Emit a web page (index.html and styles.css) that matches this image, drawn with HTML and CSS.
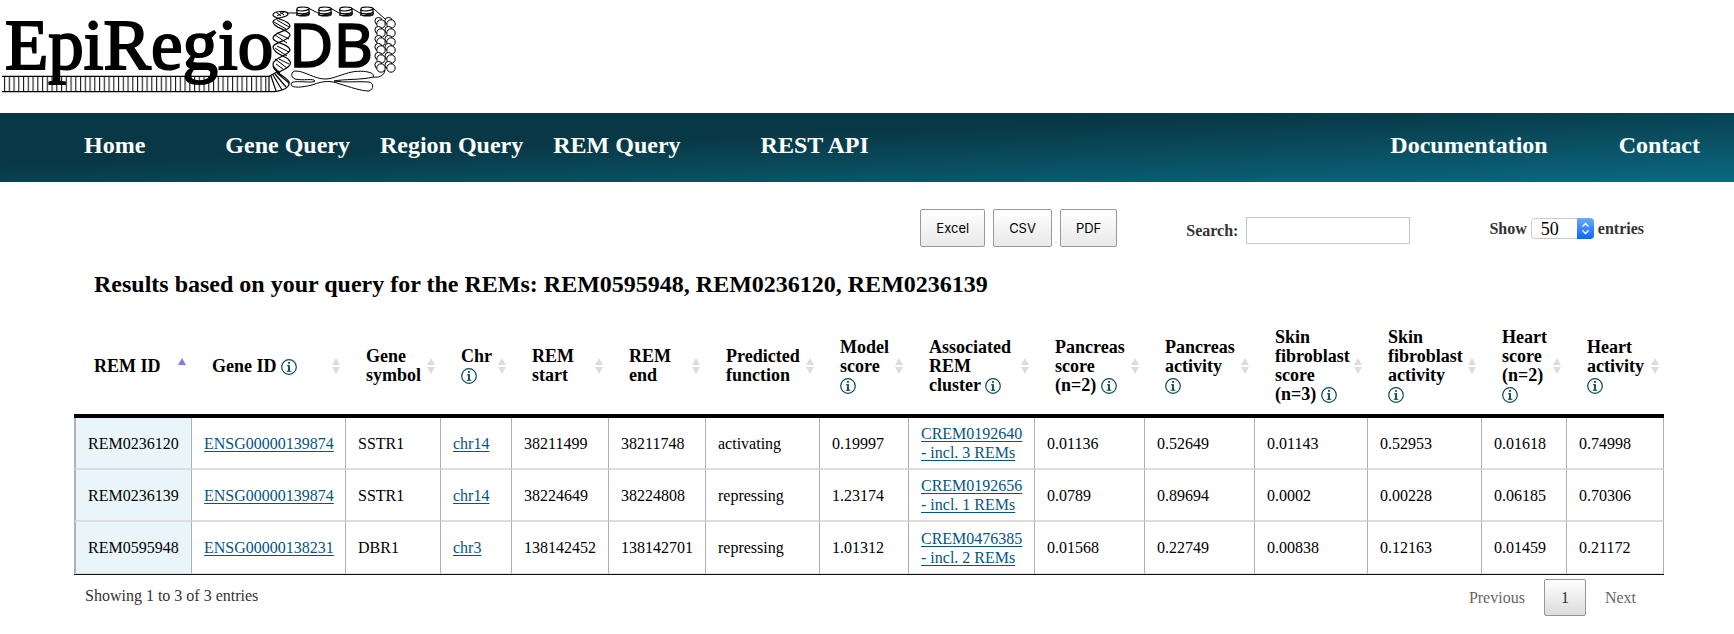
FILE: index.html
```html
<!DOCTYPE html>
<html lang="en">
<head>
<meta charset="utf-8">
<title>EpiRegio DB</title>
<link rel="stylesheet" href="styles.css">
</head>
<body>
<svg width="0" height="0" class="defs" aria-hidden="true">
  <symbol id="info" viewBox="0 0 16 16"><circle cx="8" cy="8" r="7.3" fill="none" stroke="currentColor" stroke-width="1.2"/><rect x="7.1" y="3" width="1.8" height="1.8" fill="currentColor"/><path d="M6 6.7H8V12.6M5.8 12.3H10.4" fill="none" stroke="currentColor" stroke-width="1.1"/><path d="M8 6.2V12.6" stroke="currentColor" stroke-width="1.7"/></symbol>
  <symbol id="sort" viewBox="0 0 8 16"><path d="M4 0L8 7H0ZM0 9H8L4 16Z" fill="#dcdcdc"/></symbol>
  <symbol id="sort-up" viewBox="0 0 8 16"><path d="M4 0L8 7H0Z" fill="#7f7fe0"/></symbol>
</svg>

<header class="brand">
  <a href="#" aria-label="EpiRegio DB">
  <svg class="logo" viewBox="0 0 400 96" width="400" height="96">
    <defs>
      <pattern id="rungs" x="4" y="76" width="4.75" height="16" patternUnits="userSpaceOnUse"><path d="M.6 0V16" stroke="#000" stroke-width="1"/></pattern>
      <g id="barrel"><path d="M1 1.5V7.5C1 9.5 13 9.5 13 7.5V1.5C13-.5 1-.5 1 1.5ZM0 3C4 4.5 10 4.5 14 1.6M0 6C4 7 10 7 14 5M0 8C5 8.5 10 8.3 14 6.8"/></g>
      <g id="bead" fill="#fff"><circle cx="-12.5" cy="-3" r="3.6"/><circle cx="-2.5" cy="-3" r="3.6"/><circle cx="-10" cy="0" r="4.2"/><circle cx="0" cy="0" r="4.2"/></g>
    </defs>
    <rect x="4" y="76" width="264" height="16" fill="url(#rungs)"/>
    <g fill="none" stroke="#000" stroke-width="1.2">
      <path d="M2 76.3H269L279 71M2 91.7H268C282 92 290 88 289 82C288 77 275 74 273 66"/>
      <path d="M269 76L269 91M271 76L276 91M273 75L282 90M275 74L286 87M277 73L289 83"/>
      <path d="M279 72C288 68 294 64 288 59C284 56 273 53 273 47C273 42 290 41 290 35C290 30 273 28 273 22C273 17 288 18 288 14C288 10 273 11 273 15C273 19 290 20 290 26C290 31 273 32 273 38C273 43 290 44 290 50C290 55 273 58 273 64C273 68 277 70 280 73"/>
      <path d="M275 59L287 68M276 64L283 69M279 59L289 64M275 48L287 56M277 46L289 52M275 35L287 43M277 33L289 39M274 22L286 29M277 20L289 27M276 12L281 16M280 12L284 15M284 12L277 16" stroke-width="1"/>
      <path d="M287 13L296 13M310 9L318 13M332 9L339 13M353 9L360 13M374 9L385 19" stroke-width="1"/>
      <g stroke-width="1.2"><use href="#barrel" x="296" y="7"/><use href="#barrel" x="318" y="7"/><use href="#barrel" x="339" y="7"/><use href="#barrel" x="360" y="7"/></g>
      <g stroke-width="1"><use href="#bead" x="391" y="24"/><use href="#bead" x="391" y="33"/><use href="#bead" x="391" y="42"/><use href="#bead" x="391" y="50"/><use href="#bead" x="391" y="59"/><use href="#bead" x="391" y="68"/></g>
      <path d="M385 70C384 76 379 78 373 77C376 72 362 70 352 72C342 74 333 79 325 79C315 79 304 71 296 71C291 71 290 77 295 79C303 81 314 78 315 81C312 84 291 79 291 84C291 89 304 87 312 85C325 80 332 81 340 84C350 87 361 91 369 91C374 89 374 83 369 82C357 81 345 83 334 81C343 79 363 80 373 77" stroke-width="1"/>
    </g>
    <text x="5" y="69" class="logo-serif">EpiRegio</text>
    <text x="289" y="67" class="logo-sans">DB</text>
  </svg>
  </a>
</header>

<nav class="nav">
  <a href="#">Home</a>
  <div class="queries"><a href="#">Gene Query</a><a href="#">Region Query</a><a href="#">REM Query</a></div>
  <a href="#">REST API</a>
  <div class="nav-end"><a href="#">Documentation</a><a href="#">Contact</a></div>
</nav>

<main class="main">
  <div class="toolbar">
    <div class="exports"><button>Excel</button><button>CSV</button><button>PDF</button></div>
    <div class="search"><label for="q">Search:</label><input id="q" type="search"></div>
    <div class="length"><label for="len">Show</label><span class="select"><select id="len"><option>50</option></select><svg viewBox="0 0 17 21" width="17" height="21" aria-hidden="true"><path d="M5.5 8.5L8.5 5.5L11.5 8.5M5.5 12.5L8.5 15.5L11.5 12.5" fill="none" stroke="#fff" stroke-width="1.5"/></svg></span><span>entries</span></div>
  </div>

  <h1>Results based on your query for the REMs: REM0595948, REM0236120, REM0236139</h1>

  <table>
    <colgroup><col class="c1"><col class="c2"><col class="c3"><col class="c4"><col class="c5"><col class="c6"><col class="c7"><col class="c8"><col class="c9"><col class="c10"><col class="c11"><col class="c12"><col class="c13"><col class="c14"><col class="c15"></colgroup>
    <thead>
      <tr>
        <th><div class="head">REM ID<svg class="sort"><use href="#sort-up"/></svg></div></th>
        <th><div class="head"><span>Gene ID <svg class="info"><use href="#info"/></svg></span><svg class="sort"><use href="#sort"/></svg></div></th>
        <th><div class="head">Gene<br>symbol<svg class="sort"><use href="#sort"/></svg></div></th>
        <th><div class="head">Chr<br><svg class="info"><use href="#info"/></svg><svg class="sort"><use href="#sort"/></svg></div></th>
        <th><div class="head">REM<br>start<svg class="sort"><use href="#sort"/></svg></div></th>
        <th><div class="head">REM<br>end<svg class="sort"><use href="#sort"/></svg></div></th>
        <th><div class="head">Predicted<br>function<svg class="sort"><use href="#sort"/></svg></div></th>
        <th><div class="head">Model<br>score<br><svg class="info"><use href="#info"/></svg><svg class="sort"><use href="#sort"/></svg></div></th>
        <th><div class="head">Associated<br>REM<br>cluster <svg class="info"><use href="#info"/></svg><svg class="sort"><use href="#sort"/></svg></div></th>
        <th><div class="head">Pancreas<br>score<br>(n=2) <svg class="info"><use href="#info"/></svg><svg class="sort"><use href="#sort"/></svg></div></th>
        <th><div class="head">Pancreas<br>activity<br><svg class="info"><use href="#info"/></svg><svg class="sort"><use href="#sort"/></svg></div></th>
        <th><div class="head">Skin<br>fibroblast<br>score<br>(n=3) <svg class="info"><use href="#info"/></svg><svg class="sort"><use href="#sort"/></svg></div></th>
        <th><div class="head">Skin<br>fibroblast<br>activity<br><svg class="info"><use href="#info"/></svg><svg class="sort"><use href="#sort"/></svg></div></th>
        <th><div class="head">Heart<br>score<br>(n=2)<br><svg class="info"><use href="#info"/></svg><svg class="sort"><use href="#sort"/></svg></div></th>
        <th><div class="head">Heart<br>activity<br><svg class="info"><use href="#info"/></svg><svg class="sort"><use href="#sort"/></svg></div></th>
      </tr>
    </thead>
    <tbody>
      <tr><td>REM0236120</td><td><a href="#">ENSG00000139874</a></td><td>SSTR1</td><td><a href="#">chr14</a></td><td>38211499</td><td>38211748</td><td>activating</td><td>0.19997</td><td><a href="#">CREM0192640<br>- incl. 3 REMs</a></td><td>0.01136</td><td>0.52649</td><td>0.01143</td><td>0.52953</td><td>0.01618</td><td>0.74998</td></tr>
      <tr><td>REM0236139</td><td><a href="#">ENSG00000139874</a></td><td>SSTR1</td><td><a href="#">chr14</a></td><td>38224649</td><td>38224808</td><td>repressing</td><td>1.23174</td><td><a href="#">CREM0192656<br>- incl. 1 REMs</a></td><td>0.0789</td><td>0.89694</td><td>0.0002</td><td>0.00228</td><td>0.06185</td><td>0.70306</td></tr>
      <tr><td>REM0595948</td><td><a href="#">ENSG00000138231</a></td><td>DBR1</td><td><a href="#">chr3</a></td><td>138142452</td><td>138142701</td><td>repressing</td><td>1.01312</td><td><a href="#">CREM0476385<br>- incl. 2 REMs</a></td><td>0.01568</td><td>0.22749</td><td>0.00838</td><td>0.12163</td><td>0.01459</td><td>0.21172</td></tr>
    </tbody>
  </table>

  <div class="footer">
    <div>Showing 1 to 3 of 3 entries</div>
    <div class="pager"><button disabled>Previous</button><button class="current">1</button><button disabled>Next</button></div>
  </div>
</main>
</body>
</html>
```

FILE: styles.css
```css
* { box-sizing: border-box; }
body { margin: 0; background: #fff; color: #000; font: 16px/19px "Liberation Serif", serif; }
.defs { position: absolute; }
.brand { height: 113px; }
.logo { display: block; }
.logo-serif { font: 71px "Liberation Serif", serif; stroke: #000; stroke-width: 2px; }
.logo-sans { font: 61px "Noto Sans", sans-serif; stroke: #000; stroke-width: 1.5px; }

.nav { display: flex; align-items: center; gap: 80px; padding: 19px 34px 23px 84px; background: linear-gradient(to bottom right, #083845 38%, #0b6982 100%); }
.nav a { color: #fff; font-size: 24px; line-height: 27px; font-weight: bold; text-decoration: none; white-space: nowrap; }
.queries { display: flex; gap: 30px; }
.nav-end { display: flex; gap: 71px; margin-left: auto; }

.main { padding: 27px 70px 16px 74px; }
.toolbar { display: flex; justify-content: flex-end; align-items: flex-start; padding-right: 20px; color: #333; font-weight: bold; }
.exports { display: flex; gap: 8px; margin-right: 69px; }
.exports button { height: 38px; padding: 0 15px; border: 1px solid #999; border-radius: 2px; background: linear-gradient(#fff, #e9e9e9); color: #000; font: 13px Inter, sans-serif; }
.search { display: flex; align-items: center; gap: 8px; margin: 8px 79px 0 0; }
.search input { width: 164px; height: 27px; border: 1px solid #c8c8c8; background: #fff; padding: 2px 6px; font: 16px "Liberation Serif", serif; appearance: none; }
.length { display: flex; align-items: center; gap: 4px; margin-top: 9px; }
.select { position: relative; display: block; height: 21px; }
.select select { display: block; width: 63px; height: 21px; padding: 0 22px 0 9px; border: 1px solid #ccc; border-radius: 4px; background: #fff; color: #000; font: 18px/18px "Liberation Serif", serif; appearance: none; }
.select svg { position: absolute; right: 0; top: 0; border-radius: 0 4px 4px 0; background: linear-gradient(#6aaaf8, #0a68ff); pointer-events: none; }

h1 { margin: 23px 0 20px 20px; font-size: 24px; line-height: 28px; }

table { width: 100%; table-layout: fixed; border-collapse: separate; border-spacing: 0; border-bottom: 1px solid #111; }
.c1 { width: 117px; } .c2 { width: 154px; } .c3 { width: 95px; } .c4 { width: 71px; }
.c5, .c6 { width: 97px; } .c7, .c13 { width: 114px; } .c8 { width: 89px; } .c9 { width: 126px; }
.c10, .c11 { width: 110px; } .c12 { width: 113px; } .c14 { width: 85px; } .c15 { width: 98px; }
th { padding: 0; border-bottom: 4px solid #000; text-align: left; font-size: 18px; }
.head { position: relative; padding: 10px 0 10px 21px; white-space: nowrap; }
th:first-child .head { padding-left: 20px; }
.info { width: 16px; height: 16px; color: #0b4a55; vertical-align: -3px; }
.sort { position: absolute; right: 5px; top: calc(50% - 8px); width: 8px; height: 16px; }
td { height: 52px; padding: 6px 0 6px 12px; border-left: 1px solid #b0b0b0; border-bottom: 2px solid #ddd; white-space: nowrap; }
td:first-child { border-left-width: 2px; background: #eaf5fa; }
td:last-child { border-right: 1px solid #b0b0b0; }
tbody tr:last-child td { border-bottom-width: 1px; }
td a { color: #045582; text-underline-offset: 2px; }

.footer { display: flex; justify-content: space-between; align-items: flex-start; padding: 4px 11px 0 11px; color: #333; }
.footer > div:first-child { padding-top: 7px; }
.pager { display: flex; gap: 2px; }
.pager button { height: 37px; padding: 0 16px; border: 1px solid transparent; border-radius: 2px; background: none; color: #666; font: 16px "Liberation Serif", serif; }
.pager .current { min-width: 42px; border-color: #979797; background: linear-gradient(#fff, #dcdcdc); color: #333; }
```
